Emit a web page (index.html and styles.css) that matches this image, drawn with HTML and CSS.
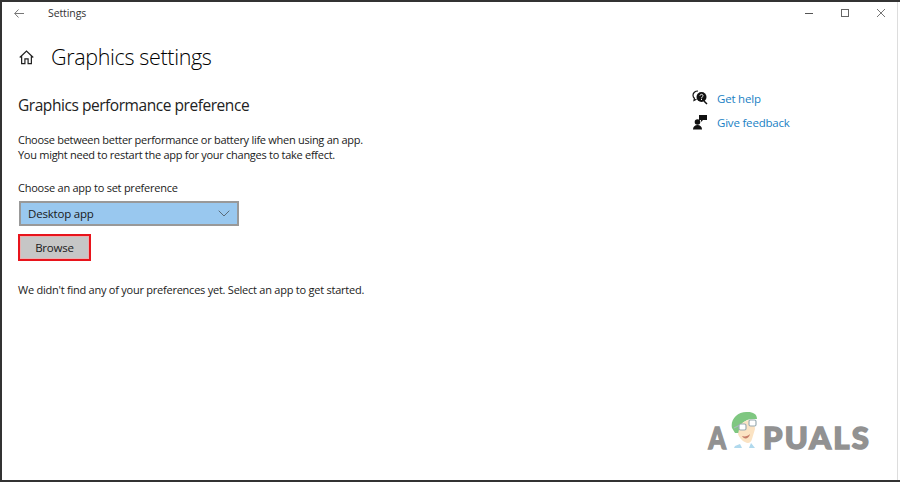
FILE: index.html
```html
<!DOCTYPE html>
<html lang="en">
<head>
<meta charset="utf-8">
<title>Settings</title>
<link rel="stylesheet" href="styles.css">
</head>
<body>
<div class="window">
  <header class="titlebar">
    <div class="title-left">
      <svg class="back" width="10" height="9" viewBox="0 0 10 9"><path d="M4.500.5.700 4.500l3.800 4M.7 4.500H10" fill="none" stroke="#777" stroke-width="1"/></svg>
      <span class="app-name">Settings</span>
    </div>
    <div class="controls">
      <svg width="8" height="8" viewBox="0 0 8 8"><path d="M0 4.500h8" stroke="#555" stroke-width="1"/></svg>
      <svg width="8" height="8" viewBox="0 0 8 8"><rect x=".5" y=".5" width="7" height="7" fill="none" stroke="#666"/></svg>
      <svg width="8" height="8" viewBox="0 0 8 8"><path d="M0 0l8 8M8 0 0 8" stroke="#666" stroke-width=".9" fill="none"/></svg>
    </div>
  </header>
  <div class="content">
    <main class="main">
      <div class="page-head">
        <svg class="home" width="15" height="15" viewBox="0 0 16 16"><path d="M.8 8 8 1.200 15.200 8M2.800 6.500V14.500H6.300V9.500H9.700V14.500H13.200V6.500" fill="none" stroke="#222" stroke-width="1.300"/></svg>
        <h1>Graphics settings</h1>
      </div>
      <h2>Graphics performance preference</h2>
      <p class="desc">Choose between better performance or battery life when using an app.<br>You might need to restart the app for your changes to take effect.</p>
      <label class="field-label">Choose an app to set preference</label>
      <div class="select">
        <span>Desktop app</span>
        <svg width="12" height="7" viewBox="0 0 12 7"><path d="M.7.7 6 6l5.300-5.300" fill="none" stroke="#5a6b7a" stroke-width="1"/></svg>
      </div>
      <button class="browse">Browse</button>
      <p class="empty">We didn't find any of your preferences yet. Select an app to get started.</p>
    </main>
    <aside class="side">
      <a class="link">
        <svg width="16" height="16" viewBox="0 0 16 16"><path d="M6 1C3 1 1 3 1 5.300c0 1.300.6 2.300 1.400 3L2 10.500 4.500 9.300" fill="none" stroke="#111" stroke-width="1.200"/><circle cx="9.500" cy="7" r="5" fill="#111"/><path d="M12 11l3 3" stroke="#111" stroke-width="1.500"/><path d="M8 5.800c0-2 3-2 3 0 0 1.200-1.500 1.200-1.500 2.500M9.500 9v1" stroke="#fff" stroke-width="1" fill="none"/></svg>
        <span>Get help</span>
      </a>
      <a class="link">
        <svg width="16" height="16" viewBox="0 0 16 16"><circle cx="5.500" cy="8" r="2.800" fill="#111"/><path d="M1 15.500c0-3 2-4.500 4.500-4.500S10 12.500 10 15.500z" fill="#111"/><path d="M7 1h8v5h-4l-2 2V6H7z" fill="#111"/></svg>
        <span>Give feedback</span>
      </a>
    </aside>
  </div>
  <div class="watermark">
    <span class="wm-text wm-a">A</span>
    <svg class="wm-face" width="28" height="38" viewBox="0 0 28 38">
      <path d="M2 17C0 8 8 0 18 1c5 0 9 2 9 7l-4 0c-6 0-10 3-12 6l-1 8-5 0z" fill="#72c274"/>
      <path d="M10 14c4-4 9-6 14-5l1 9-3 10c-1 4-4 5-7 3-3-1-6-5-7-8z" fill="#fbe0bd"/>
      <path d="M4 17l6-3" stroke="#9fb0b5" stroke-width="1.200"/>
      <rect x="9" y="13" width="7" height="6" rx="1.500" fill="#fff" stroke="#90a4ab" stroke-width="1.200"/>
      <rect x="19" y="9" width="7" height="6" rx="1.500" fill="#fff" stroke="#90a4ab" stroke-width="1.200"/>
      <path d="M12 25c3 1 6 0 8-2-1 5-6 6-8 2z" fill="#c0705a"/>
      <path d="M5 35l5-2 2 4H4zM21 32l4 5h-6z" fill="#a8d5ec"/>
    </svg>
    <span class="wm-text">PUALS</span>
  </div>
</div>
</body>
</html>
```
FILE: styles.css
```css
* { box-sizing: border-box; }
html, body { margin: 0; height: 100%; }
body { background: #fff; font-family: "Open Sans", "Noto Sans", sans-serif; color: #1a1a1a; overflow: hidden; }
.window { position: relative; width: 900px; height: 482px; border: solid #333; border-width: 2px 0 2px 2px; background: #fff; box-shadow: inset -2px 0 0 #fff, inset -3px 0 0 #ddd; display: flex; flex-direction: column; }
.titlebar { height: 22px; display: flex; justify-content: space-between; align-items: center; flex: none; }
.title-left { display: flex; align-items: center; padding-left: 12px; }
.back { margin-right: 24px; }
.app-name { font-size: 10.500px; color: #333; letter-spacing: -.1px; }
.controls { display: flex; gap: 28px; padding-right: 15px; align-items: center; }
.content { flex: 1; display: flex; justify-content: space-between; }
.main { padding: 18px 0 0 16px; }
.page-head { display: flex; align-items: center; gap: 17px; height: 30px; }
.home { margin-left: 1px; flex: none; }
h1 { margin: 0; font-size: 21.500px; font-weight: 300; letter-spacing: -.35px; color: #000; line-height: 30px; white-space: nowrap; }
h2 { margin: 23px 0 0; font-size: 15.500px; font-weight: 400; letter-spacing: -.45px; line-height: 20px; color: #222; }
.desc { margin: 17px 0 0; font-size: 11px; letter-spacing: -.28px; line-height: 15px; }
.field-label { display: block; margin-top: 18px; font-size: 11px; letter-spacing: -.24px; line-height: 16px; }
.select { margin: 5px 0 0 1px; width: 220px; height: 25px; background: #99c8ef; border: 2px solid #999; display: flex; align-items: center; justify-content: space-between; padding: 0 7px 0 7px; font-size: 11.500px; letter-spacing: -.2px; }
.browse { display: block; margin: 8px 0 0; width: 73px; height: 27px; background: #c6c6c6; border: 2px solid #e8141c; box-shadow: inset 0 0 0 1px #e8b0b0; font: inherit; font-size: 11.500px; letter-spacing: -.2px; color: #1a1a1a; padding: 0; }
.empty { margin: 21px 0 0; font-size: 11px; letter-spacing: -.24px; line-height: 16px; white-space: nowrap; }
.side { width: 208px; padding-top: 66px; flex: none; display: flex; flex-direction: column; gap: 8px; }
.link { display: flex; align-items: center; gap: 9px; height: 16px; color: #1a7fc4; font-size: 11.500px; letter-spacing: -.2px; }
.watermark { position: absolute; right: 29px; bottom: 31px; display: flex; align-items: flex-end; }
.wm-text { font-family: "Lato", sans-serif; font-weight: 900; font-size: 31px; line-height: 24px; height: 24px; color: #929292; letter-spacing: 2.200px; -webkit-text-stroke: 1.500px #929292; }
.wm-a { transform: scaleX(.8); margin: 0 -6px 0 -2px; }
.wm-face { margin: 0 5px 0 6px; opacity: .9; }
```
